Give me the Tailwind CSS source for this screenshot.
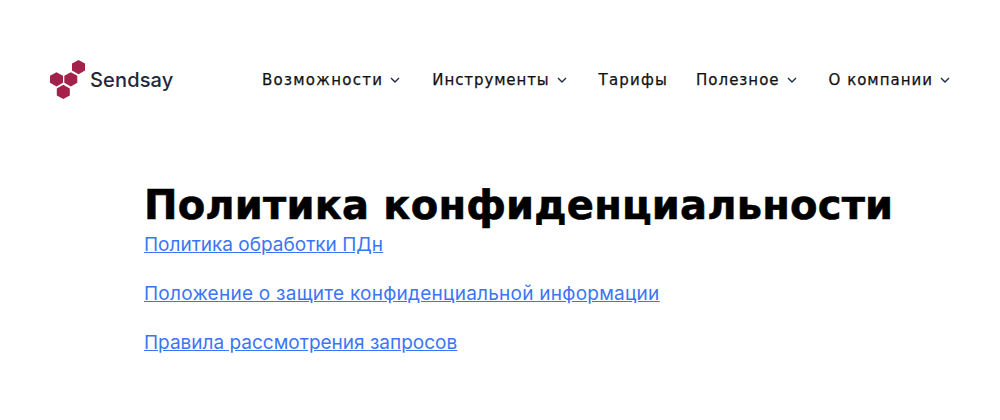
<!DOCTYPE html>
<html lang="ru">
<head>
<meta charset="utf-8">
<script src="https://cdn.jsdelivr.net/npm/@tailwindcss/browser@4"></script>
</head>
<body class="bg-white font-['Inter',sans-serif] h-[420px] overflow-hidden">
<header class="flex items-center justify-between pl-[50px] pr-[48px] pt-[60px] h-[100px]">
  <a class="flex items-center gap-[3px]" href="#">
    <svg width="37" height="40" viewBox="50 60 37 40" class="fill-[#a3224c]">
      <polygon points="78.5,60 85,63.6 85,70.6 78.5,74.2 72,70.6 72,63.6"/>
      <polygon points="56.5,72.2 63,75.8 63,82.8 56.5,86.4 50,82.8 50,75.8"/>
      <polygon points="70.8,72.2 77.3,75.8 77.3,82.8 70.8,86.4 64.3,82.8 64.3,75.8"/>
      <polygon points="63.3,84.8 69.8,88.4 69.8,95.4 63.3,99 56.8,95.4 56.8,88.4"/>
    </svg>
    <span class="text-[20px] font-medium text-[#23283b] tracking-[0.15px] leading-none mt-[-1px]">Sendsay</span>
  </a>
  <nav class="flex items-center gap-[30px] text-[15px] tracking-[1px] font-['DejaVu_Sans',sans-serif] text-[#111] [-webkit-text-stroke:0.25px_#111] leading-none">
    <a class="flex items-center gap-[5px] tracking-[1.3px]" href="#">Возможности
      <svg width="14" height="6" viewBox="-2 0 14 6" fill="none" stroke="#1f2a44" stroke-width="1.4"><path d="M1 1l4 4 4-4"/></svg></a>
    <a class="flex items-center gap-[5px] tracking-[0.9px]" href="#">Инструменты
      <svg width="14" height="6" viewBox="-2 0 14 6" fill="none" stroke="#1f2a44" stroke-width="1.4"><path d="M1 1l4 4 4-4"/></svg></a>
    <a class="tracking-[1.2px] mr-[-2px]" href="#">Тарифы</a>
    <a class="flex items-center gap-[5px]" href="#">Полезное
      <svg width="14" height="6" viewBox="-2 0 14 6" fill="none" stroke="#1f2a44" stroke-width="1.4"><path d="M1 1l4 4 4-4"/></svg></a>
    <a class="flex items-center gap-[5px] tracking-[1px]" href="#">О компании
      <svg width="14" height="6" viewBox="-2 0 14 6" fill="none" stroke="#1f2a44" stroke-width="1.4"><path d="M1 1l4 4 4-4"/></svg></a>
  </nav>
</header>
<main class="pl-[144px] pt-[81px]">
  <h1 class="text-[40px] font-bold font-['DejaVu_Sans',sans-serif] text-black tracking-[0.2px] [-webkit-text-stroke:0.6px_#000] leading-[48px]">Политика конфиденциальности</h1>
  <div class="flex flex-col gap-[25px] mt-[4px] text-[19px] leading-[24px] text-[#3b75f6] underline">
    <a href="#">Политика обработки ПДн</a>
    <a class="tracking-[0.25px]" href="#">Положение о защите конфиденциальной информации</a>
    <a href="#">Правила рассмотрения запросов</a>
  </div>
</main>
</body>
</html>
